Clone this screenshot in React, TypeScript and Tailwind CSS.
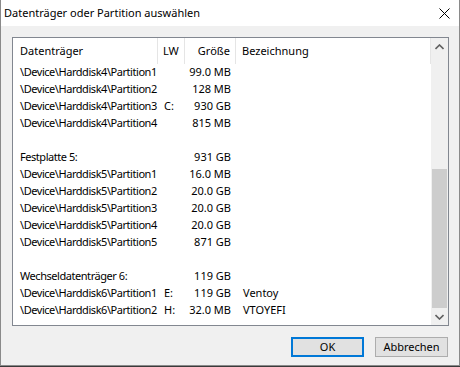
import React from 'react';

type Row = { name: string; lw?: string; size?: string; label?: string } | null;

const rows: Row[] = [
  { name: '\\Device\\Harddisk4\\Partition1', size: '99.0 MB' },
  { name: '\\Device\\Harddisk4\\Partition2', size: '128 MB' },
  { name: '\\Device\\Harddisk4\\Partition3', lw: 'C:', size: '930 GB' },
  { name: '\\Device\\Harddisk4\\Partition4', size: '815 MB' },
  null,
  { name: 'Festplatte 5:', size: '931 GB' },
  { name: '\\Device\\Harddisk5\\Partition1', size: '16.0 MB' },
  { name: '\\Device\\Harddisk5\\Partition2', size: '20.0 GB' },
  { name: '\\Device\\Harddisk5\\Partition3', size: '20.0 GB' },
  { name: '\\Device\\Harddisk5\\Partition4', size: '20.0 GB' },
  { name: '\\Device\\Harddisk5\\Partition5', size: '871 GB' },
  null,
  { name: 'Wechseldatenträger 6:', size: '119 GB' },
  { name: '\\Device\\Harddisk6\\Partition1', lw: 'E:', size: '119 GB', label: 'Ventoy' },
  { name: '\\Device\\Harddisk6\\Partition2', lw: 'H:', size: '32.0 MB', label: 'VTOYEFI' },
];

function Chevron({ down }: { down?: boolean }) {
  return (
    <svg width="9" height="6" viewBox="0 0 9 6" className={down ? 'rotate-180' : ''}>
      <path d="M0.5 5 L4.5 1 L8.5 5" fill="none" stroke="#606060" strokeWidth="1.6" />
    </svg>
  );
}

export default function App() {
  return (
    <div className="w-[460px] h-[367px] bg-[#3a3a3a] text-[11px] text-black font-['Noto_Sans',sans-serif] overflow-hidden">
      <div className="h-[366px] flex flex-col border-x border-b border-[#8a8a8a] bg-[#f0f0f0]">
        {/* title bar */}
        <div className="h-[26px] shrink-0 bg-white flex items-center justify-between pl-[3px] pr-[9px]">
          <span className="text-[11px]">Datenträger oder Partition auswählen</span>
          <svg width="11" height="11" viewBox="0 0 11 11">
            <path d="M0.5 0.5 L10.5 10.5 M10.5 0.5 L0.5 10.5" stroke="#000" strokeWidth="1" />
          </svg>
        </div>

        {/* list box */}
        <div className="mt-[11px] ml-[11px] w-[437px] h-[289px] border border-[#828790] bg-white flex">
          <div className="flex-1 flex flex-col">
            <div className="h-[26px] flex items-center">
              <div className="w-[145px] h-full pl-[7px] flex items-center border-r border-[#e5e5e5]">Datenträger</div>
              <div className="w-[27px] h-full pl-[5px] flex items-center border-r border-[#e5e5e5]">LW</div>
              <div className="w-[51px] h-full pr-[5px] flex items-center justify-end border-r border-[#e5e5e5]">Größe</div>
              <div className="flex-1 h-full pl-[6px] flex items-center border-r border-[#e5e5e5]">Bezeichnung</div>
            </div>
            <div className="flex flex-col">
              {rows.map((r, i) => (
                <div key={i} className="h-[17px] flex items-center whitespace-nowrap">
                  {r && (
                    <>
                      <div className="w-[145px] pl-[7px] tracking-[-0.45px]">{r.name}</div>
                      <div className="w-[27px] pl-[6px]">{r.lw}</div>
                      <div className="w-[51px] pr-[5px] text-right">{r.size}</div>
                      <div className="flex-1 pl-[7px]">{r.label}</div>
                    </>
                  )}
                </div>
              ))}
            </div>
          </div>
          {/* scrollbar */}
          <div className="w-[17px] bg-[#f0f0f0] flex flex-col">
            <div className="h-[17px] flex items-center justify-center">
              <Chevron />
            </div>
            <div className="flex-1 flex flex-col justify-end px-[1px]">
              <div className="h-[139px] bg-[#cdcdcd]" />
            </div>
            <div className="h-[17px] flex items-center justify-center">
              <Chevron down />
            </div>
          </div>
        </div>

        {/* buttons */}
        <div className="mt-[11px] flex justify-end gap-[11px] pr-[11px]">
          <button className="w-[73px] h-[20px] bg-[#e1e1e1] border-2 border-[#0078d7] flex items-center justify-center">OK</button>
          <button className="w-[73px] h-[20px] bg-[#e1e1e1] border border-[#adadad] flex items-center justify-center">Abbrechen</button>
        </div>
      </div>
    </div>
  );
}
